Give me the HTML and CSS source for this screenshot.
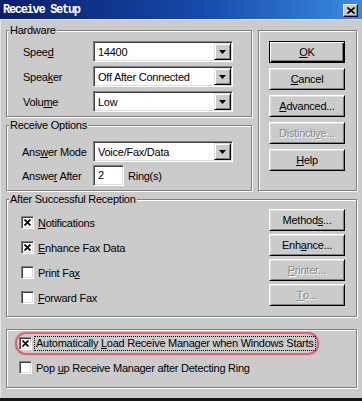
FILE: index.html
```html
<!DOCTYPE html>
<html>
<head>
  <title>Receive Setup</title>
  <link rel="stylesheet" href="styles.css">
</head>
<body>
  <div class="window">
    <div class="titlebar">
      <span class="title">Receive Setup</span>
      <div class="close">
        <svg width="8" height="7" viewBox="0 0 8 7"><path d="M0.5 0.5 L7.5 6.5 M7.5 0.5 L0.5 6.5" stroke="#000" stroke-width="1.6"/></svg>
      </div>
    </div>

    <div class="content">
      <div class="top">
        <div class="leftcol">
          <div class="group">
            <div class="group-title">Hardware</div>
            <div class="form hardware">
              <span>Spee<u>d</u></span>
              <div class="combo"><span class="value">14400</span><div class="arrow"><svg width="7" height="4"><polygon points="0,0 7,0 3.5,4" fill="#000"/></svg></div></div>
              <span>Spea<u>k</u>er</span>
              <div class="combo"><span class="value">Off After Connected</span><div class="arrow"><svg width="7" height="4"><polygon points="0,0 7,0 3.5,4" fill="#000"/></svg></div></div>
              <span>Volu<u>m</u>e</span>
              <div class="combo"><span class="value">Low</span><div class="arrow"><svg width="7" height="4"><polygon points="0,0 7,0 3.5,4" fill="#000"/></svg></div></div>
            </div>
          </div>

          <div class="group">
            <div class="group-title">Receive Options</div>
            <div class="form options">
              <span>Ans<u>w</u>er Mode</span>
              <div class="combo"><span class="value">Voice/Fax/Data</span><div class="arrow"><svg width="7" height="4"><polygon points="0,0 7,0 3.5,4" fill="#000"/></svg></div></div>
              <span>Answe<u>r</u> After</span>
              <div class="rings"><div class="edit">2</div><span>Ring(s)</span></div>
            </div>
          </div>
        </div>

        <div class="group side-buttons">
          <div class="btn default"><u>O</u>K</div>
          <div class="btn"><u>C</u>ancel</div>
          <div class="btn"><u>A</u>dvanced...</div>
          <div class="btn disabled">Distincti<u>v</u>e...</div>
          <div class="btn"><u>H</u>elp</div>
        </div>
      </div>

      <div class="group reception">
        <div class="group-title">After Successful Reception</div>
        <div class="reception-body">
          <div class="checks">
            <div class="check-row"><div class="cb checked"><svg width="7" height="7"><path d="M0.5 0.5 L6.5 6.5 M6.5 0.5 L0.5 6.5" stroke="#000" stroke-width="1.7"/></svg></div><span><u>N</u>otifications</span></div>
            <div class="check-row"><div class="cb checked"><svg width="7" height="7"><path d="M0.5 0.5 L6.5 6.5 M6.5 0.5 L0.5 6.5" stroke="#000" stroke-width="1.7"/></svg></div><span><u>E</u>nhance Fax Data</span></div>
            <div class="check-row"><div class="cb"></div><span>Print Fa<u>x</u></span></div>
            <div class="check-row"><div class="cb"></div><span><u>F</u>orward Fax</span></div>
          </div>
          <div class="buttons">
            <div class="btn">Method<u>s</u>...</div>
            <div class="btn">Enh<u>a</u>nce...</div>
            <div class="btn disabled"><u>P</u>rinter...</div>
            <div class="btn disabled"><u>T</u>o...</div>
          </div>
        </div>
      </div>

      <div class="group startup">
        <div class="highlight">
          <div class="check-row"><div class="cb focus-box"><svg width="7" height="7"><path d="M0.5 0.5 L6.5 6.5 M6.5 0.5 L0.5 6.5" stroke="#000" stroke-width="1.7"/></svg></div><span class="focused">Automatically <u>L</u>oad Receive Manager when Windows Starts</span></div>
        </div>
        <div class="check-row popup"><div class="cb"></div><span>Pop <u>u</u>p Receive Manager after Detecting Ring</span></div>
      </div>
    </div>
  </div>
</body>
</html>
```

FILE: styles.css
```css
* {
  box-sizing: border-box;
}

body {
  margin: 0;
  background: #cbcbcb;
  font: 11px "Liberation Sans", Arial, sans-serif;
  letter-spacing: -0.25px;
  color: #000;
  white-space: nowrap;
}

.window {
  width: 362px;
  height: 401px;
  background: #cbcbcb;
  border-bottom: 3px solid #151515;
  display: flex;
  flex-direction: column;
  overflow: hidden;
}

/* title bar */
.titlebar {
  height: 20px;
  flex: none;
  display: flex;
  align-items: center;
  justify-content: space-between;
  padding: 0 4px 0 3px;
  background: linear-gradient(90deg, #0b1d6b, #1549a8 55%, #3b8ae0);
  border-bottom: 1px solid #e4e4e4;
}

.title {
  color: #fff;
  font: bold 12px "Liberation Mono", monospace;
  letter-spacing: -1.3px;
  margin-top: 1px;
}

.close {
  width: 15px;
  height: 13px;
  margin-top: 2px;
  background: #cbcbcb;
  border: 1px solid;
  border-color: #fff #000 #000 #fff;
  box-shadow: inset -1px -1px #808080;
  display: flex;
  align-items: center;
  justify-content: center;
}

.content {
  flex: 1;
  padding: 10px 5px 0 5px;
  border-left: 1px solid #e4e4e4;
}

/* etched group boxes */
.group {
  border: 1px solid #808080;
  box-shadow: inset 1px 1px #fff, 1px 1px #fff;
}

.group-title {
  width: fit-content;
  height: 14px;
  line-height: 14px;
  margin: -8px 0 0 2px;
  padding: 0 1px;
  background: #cbcbcb;
}

.top {
  display: flex;
  gap: 6px;
}

.leftcol {
  width: 246px;
  display: flex;
  flex-direction: column;
  gap: 8px;
}

.form {
  display: grid;
  align-items: center;
}

.hardware {
  grid-template-columns: 70px 140px;
  grid-auto-rows: 21px;
  row-gap: 4px;
  padding: 4px 0 4px 16px;
}

.options {
  grid-template-columns: 71px 140px;
  grid-auto-rows: 21px;
  row-gap: 3px;
  padding: 9px 0 4px 15px;
}

/* sunken fields */
.combo,
.edit {
  height: 21px;
  background: #fff;
  border: 1px solid;
  border-color: #808080 #fff #fff #808080;
  box-shadow: inset 1px 1px #404040, inset -1px -1px #dcdcdc;
}

.combo {
  display: flex;
  align-items: center;
  justify-content: space-between;
  padding: 1px 1px 1px 4px;
}

.edit {
  width: 31px;
  padding: 3px 0 0 4px;
}

.rings {
  display: flex;
  align-items: center;
  gap: 4px;
}

.arrow {
  width: 17px;
  height: 17px;
  background: #cbcbcb;
  border: 1px solid;
  border-color: #dfdfdf #000 #000 #dfdfdf;
  box-shadow: inset 1px 1px #fff, inset -1px -1px #808080;
  display: flex;
  align-items: center;
  justify-content: center;
}

.arrow svg {
  display: block;
}

/* buttons */
.side-buttons {
  width: 99px;
  padding: 10px 11px 0 10px;
  display: flex;
  flex-direction: column;
  gap: 5px;
}

.btn {
  width: 76px;
  height: 22px;
  flex: none;
  background: #cbcbcb;
  border: 1px solid;
  border-color: #fff #000 #000 #fff;
  box-shadow: inset 1px 1px #dfdfdf, inset -1px -1px #808080;
  display: flex;
  align-items: center;
  justify-content: center;
}

.btn.default {
  border-color: #000;
  box-shadow: inset 1px 1px #fff, inset -1px -1px #000, inset -2px -2px #808080;
}

.btn.disabled {
  color: #888;
  text-shadow: 1px 1px #fff;
}

/* after reception */
.reception {
  margin-top: 8px;
}

.reception-body {
  display: flex;
  justify-content: space-between;
  padding: 3px 11px 10px 14px;
}

.checks {
  display: flex;
  flex-direction: column;
  gap: 12px;
  padding-top: 7px;
}

.buttons {
  display: flex;
  flex-direction: column;
  gap: 3px;
}

.check-row {
  display: flex;
  align-items: center;
  gap: 4px;
  height: 13px;
}

.cb {
  width: 13px;
  height: 13px;
  flex: none;
  background: #fff;
  border: 1px solid;
  border-color: #808080 #fff #fff #808080;
  box-shadow: inset 1px 1px #404040, inset -1px -1px #dcdcdc;
  display: flex;
  align-items: center;
  justify-content: center;
}

.cb svg {
  display: block;
}

/* startup group */
.startup {
  margin-top: 12px;
  padding: 2px 0 13px 8px;
}

.highlight {
  width: 304px;
  height: 23px;
  border: 2px solid #e0637a;
  border-radius: 11px;
  box-shadow: 0 0 1px #c44;
  padding: 3px 0 0 2px;
}

.highlight .check-row {
  gap: 3px;
}

.focused {
  outline: 1px dotted #000;
  padding: 0 1px;
  line-height: 13px;
}

.popup {
  margin: 6px 0 0 4px;
}
```
